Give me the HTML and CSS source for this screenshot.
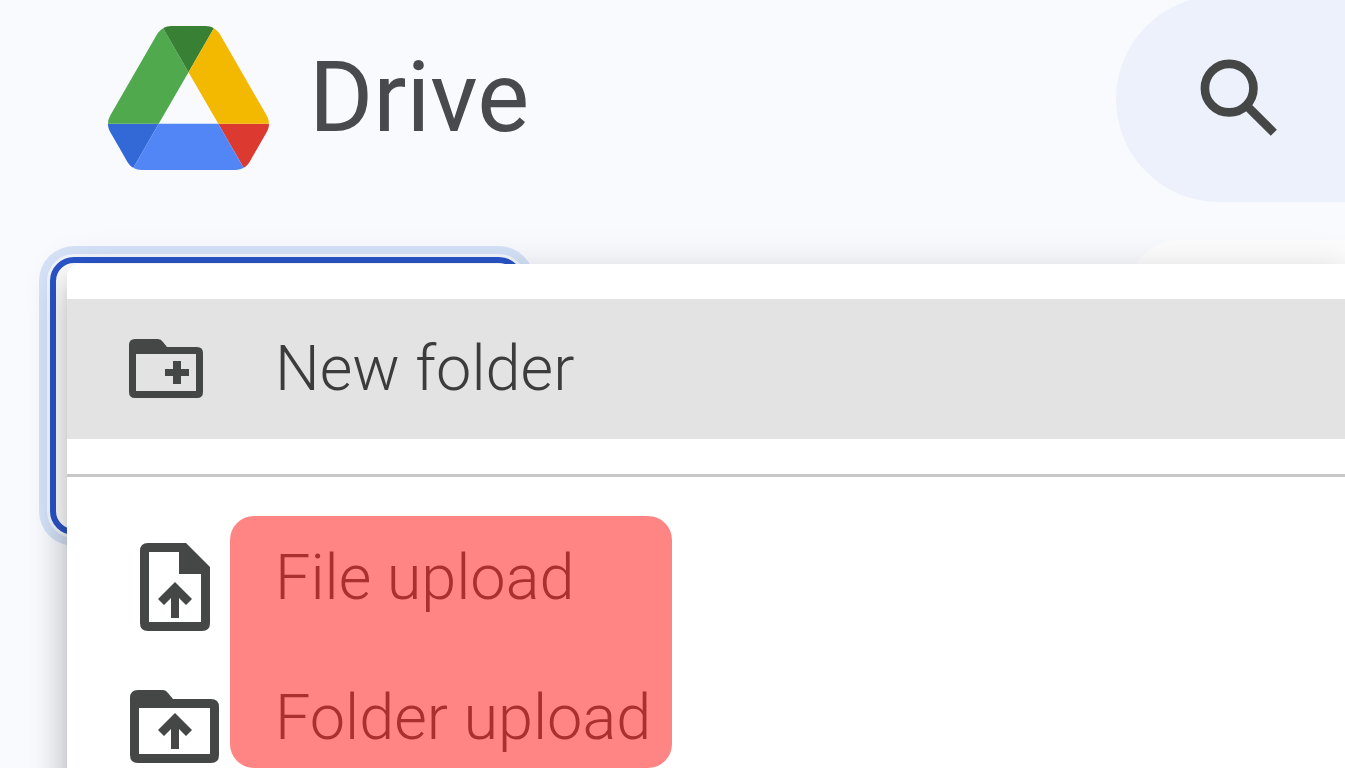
FILE: index.html
```html
<!DOCTYPE html>
<html lang="en">

<head>
    <meta charset="UTF-8">
    <meta name="viewport" content="width=device-width, initial-scale=1.0">
    <title>Drive</title>
    <link rel="stylesheet" href="styles.css">
</head>

<body>
    <header class="header">
        <a class="brand" href="#">
            <svg class="brand-logo" viewBox="0 0 87.3 78" aria-hidden="true">
                <path fill="#3269d6" d="m6.6 66.85 3.85 6.65c.8 1.4 1.95 2.5 3.3 3.3l13.75-23.8h-27.5c0 1.55.4 3.1 1.2 4.5z"/>
                <path fill="#50a94c" d="m43.65 25-13.75-23.8c-1.35.8-2.5 1.9-3.3 3.3l-25.4 44a9.06 9.06 0 0 0-1.2 4.5h27.5z"/>
                <path fill="#dc3a30" d="m73.55 76.8c1.35-.8 2.5-1.9 3.3-3.3l1.6-2.75 7.65-13.25c.8-1.4 1.2-2.95 1.2-4.5h-27.5z"/>
                <path fill="#378034" d="m43.65 25 13.75-23.8c-1.35-.8-2.9-1.2-4.5-1.2h-18.5c-1.6 0-3.15.45-4.5 1.2z"/>
                <path fill="#5286f6" d="m59.8 53h-32.3l-13.75 23.8c1.35.8 2.9 1.2 4.5 1.2h50.8c1.6 0 3.15-.45 4.5-1.2z"/>
                <path fill="#f3b900" d="m73.4 26.5-12.7-22c-.8-1.4-1.95-2.5-3.3-3.3l-13.75 23.8 16.15 28h27.45c0-1.55-.4-3.1-1.2-4.5z"/>
            </svg>
            <span class="brand-name">Drive</span>
        </a>
        <form class="search">
            <button class="search-btn" type="submit" aria-label="Search">
                <svg class="search-icon" viewBox="0 0 24 24" aria-hidden="true">
                    <circle cx="9.5" cy="9.5" r="5.6"/>
                    <path d="M13.4 13.4l6.4 6.4"/>
                </svg>
            </button>
            <input class="search-input" type="text" aria-label="Search in Drive">
        </form>
    </header>

    <main class="workspace">
        <button class="new-btn" type="button" aria-label="New"></button>
        <section class="panel"></section>

        <div class="menu" role="menu">
            <button class="menu-item active" type="button" role="menuitem">
                <svg class="menu-icon" viewBox="0 0 96 108" aria-hidden="true">
                    <path fill-rule="evenodd" d="M8 24h23q3 0 5 3l4 5h30q6 0 6 6v39q0 6-6 6H8q-6 0-6-6V30q0-6 6-6zM9 39v37h60V39z"/>
                    <path d="M38 54h8v-8h8v8h8v7h-8v8h-8v-8h-8z"/>
                </svg>
                <span>New folder</span>
            </button>
            <hr class="divider">
            <button class="menu-item" type="button" role="menuitem">
                <svg class="menu-icon" viewBox="0 0 96 108" aria-hidden="true">
                    <path fill-rule="evenodd" d="M21 19h38l24 24v56q0 8-8 8H21q-8 0-8-8V27q0-8 8-8zM22 28v70h52V50H52V28z"/>
                    <path d="M48 58l17 17-6 6-7-7v20h-8V74l-7 7-6-6z"/>
                </svg>
                <span>File upload</span>
            </button>
            <button class="menu-item" type="button" role="menuitem">
                <svg class="menu-icon" viewBox="0 0 96 108" aria-hidden="true">
                    <path fill-rule="evenodd" d="M11 26h25q3 0 5 3l5 6h38q8 0 8 8v48q0 8-8 8H11q-8 0-8-8V34q0-8 8-8zM12 44v46h71V44z"/>
                    <path d="M48 49l17 17-6 6-7-7v20h-8V65l-7 7-6-6z"/>
                </svg>
                <span>Folder upload</span>
            </button>
            <div class="highlight"></div>
        </div>
    </main>
</body>

</html>
```

FILE: styles.css
```css
*,
*:before,
*:after {
    box-sizing: border-box;
    margin: 0;
    padding: 0;
}

html,
body {
    height: 100%;
    overflow: hidden;
}

body {
    display: flex;
    flex-direction: column;
    background-color: #f8fafe;
    font-family: Roboto, "Liberation Sans", sans-serif;
    color: #3c3c3c;
}

button,
input {
    border: none;
    background: none;
    font: inherit;
    color: inherit;
}

.header,
.workspace {
    display: grid;
    grid-template-columns: minmax(0, 83fr) minmax(0, 17fr);
}

.header {
    height: 196px;
}

.brand {
    display: flex;
    align-items: center;
    gap: 40px;
    padding: 0 0 6px 108px;
    color: #484a4d;
    text-decoration: none;
}

.brand-logo {
    width: 161px;
    height: 144px;
}

.brand-name {
    font-size: 98px;
    line-height: 112px;
}

.search {
    display: flex;
    align-items: center;
    height: 206px;
    margin-top: -4px;
    padding-left: 72px;
    border-radius: 103px 0 0 103px;
    background-color: #edf1fc;
}

.search-btn {
    flex: none;
    width: 104px;
    height: 104px;
    cursor: pointer;
}

.search-icon {
    display: block;
    fill: none;
    stroke: #444746;
    stroke-width: 2;
}

.search-input {
    flex: 1;
    min-width: 0;
}

.workspace {
    position: relative;
    flex: 1;
    padding-top: 44px;
}

.new-btn {
    width: 473px;
    height: 278px;
    margin: 17px 0 0 50px;
    border: 6px solid #2a55c9;
    border-radius: 24px;
    background-color: #fff;
    box-shadow: 0 0 0 3px #f2f6fd, 0 0 0 11px #d5e2f7;
}

.panel {
    margin-left: 14px;
    border-radius: 48px 0 0 0;
    background-color: #fdfdfd;
}

.menu {
    position: absolute;
    top: 68px;
    left: 67px;
    right: 0;
    padding: 35px 0;
    border-radius: 12px 0 0 0;
    background-color: #fff;
    box-shadow: 0 15px 15px -9px rgba(0, 0, 0, 0.2),
        0 24px 30px 3px rgba(0, 0, 0, 0.14),
        0 9px 42px 6px rgba(0, 0, 0, 0.12);
}

.menu-item {
    display: flex;
    align-items: center;
    gap: 52px;
    width: 100%;
    height: 140px;
    padding-left: 60px;
    color: #5c5c5c;
    font-size: 63px;
    font-weight: 300;
    line-height: 72px;
    text-align: left;
    cursor: pointer;
}

.menu-item.active {
    background-color: #e3e3e3;
    color: #3c3c3c;
}

.menu-icon {
    flex: none;
    width: 96px;
    height: 108px;
    fill: #444746;
}

.divider {
    height: 3px;
    margin: 35px 0 31px;
    border: none;
    background-color: #c7c7c7;
}

/* marks the two upload entries */
.highlight {
    position: absolute;
    top: 252px;
    left: 163px;
    width: 442px;
    height: 252px;
    border-radius: 24px;
    background-color: rgba(255, 0, 0, 0.48);
    pointer-events: none;
}
```
